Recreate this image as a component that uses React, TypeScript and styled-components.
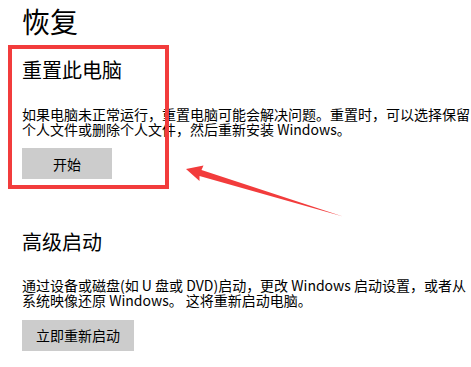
import React from "react";
import styled, { createGlobalStyle } from "styled-components";

const GlobalStyle = createGlobalStyle`
  html, body {
    margin: 0;
    padding: 0;
    background: #ffffff;
  }
  body {
    font-family: "Noto Sans CJK SC", "Noto Sans", sans-serif;
    color: #000000;
  }
`;

const Page = styled.div`
  position: relative;
  width: 471px;
  height: 367px;
  overflow: hidden;
  box-sizing: border-box;
  padding: 4px 0 0 22px;
  display: flex;
  flex-direction: column;
`;

const Title = styled.h1`
  margin: 0;
  font-size: 28px;
  line-height: 35px;
  font-weight: 400;
  color: #000;
`;

const Section = styled.section<{ $top: number }>`
  display: flex;
  flex-direction: column;
  align-items: flex-start;
  margin-top: ${(p) => p.$top}px;
`;

const Heading = styled.h2`
  margin: 0;
  font-size: 20px;
  line-height: 28px;
  font-weight: 400;
  color: #000;
`;

const Description = styled.p`
  margin: 22.5px 0 0 0;
  font-size: 14px;
  line-height: 15px;
  white-space: nowrap;
  color: #000;
`;

const ActionButton = styled.button`
  margin-top: 11.5px;
  min-width: 90px;
  height: 31px;
  padding: 0 14px;
  border: none;
  background: #cccccc;
  font-family: "Noto Sans CJK SC", "Noto Sans", sans-serif;
  font-size: 14px;
  color: #000;
  cursor: pointer;
`;

const HighlightBox = styled.div`
  position: absolute;
  left: 8px;
  top: 45px;
  width: 161px;
  height: 144px;
  box-sizing: border-box;
  border: 4px solid #f23c3c;
  pointer-events: none;
`;

const ArrowLayer = styled.svg`
  position: absolute;
  left: 0;
  top: 0;
  width: 471px;
  height: 367px;
  pointer-events: none;
`;

export default function App() {
  return (
    <>
      <GlobalStyle />
      <Page>
        <Title>恢复</Title>
        <Section $top={17}>
          <Heading>重置此电脑</Heading>
          <Description>
            如果电脑未正常运行，重置电脑可能会解决问题。重置时，可以选择保留
            <br />
            个人文件或删除个人文件，然后重新安装 Windows。
          </Description>
          <ActionButton>开始</ActionButton>
        </Section>
        <Section $top={48.5}>
          <Heading>高级启动</Heading>
          <Description>
            通过设备或磁盘(如 U 盘或 DVD)启动，更改 Windows 启动设置，或者从
            <br />
            系统映像还原 Windows。 这将重新启动电脑。
          </Description>
          <ActionButton>立即重新启动</ActionButton>
        </Section>
        <HighlightBox />
        <ArrowLayer viewBox="0 0 471 367">
          <polygon
            points="186,169 203.5,165.5 201.5,170 343,216.5 199.5,176 199.5,181"
            fill="#f23c3c"
          />
        </ArrowLayer>
      </Page>
    </>
  );
}
